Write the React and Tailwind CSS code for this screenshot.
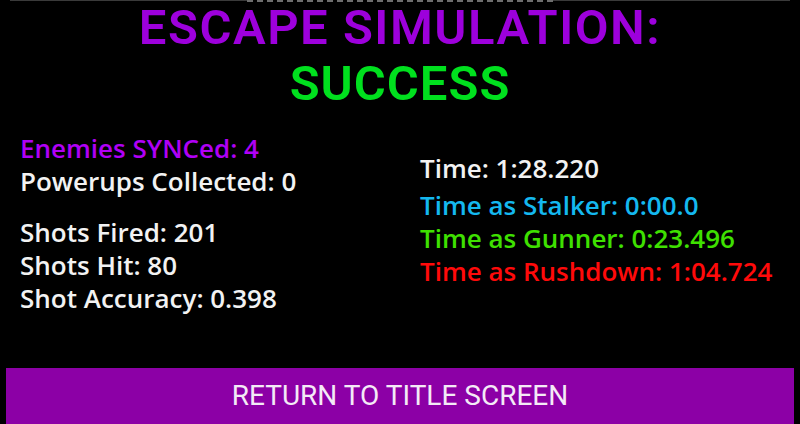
export default function App() {
  const left = [
    { text: 'Enemies SYNCed: 4', color: 'text-[#b000f5]' },
    { text: 'Powerups Collected: 0', color: 'text-[#f2f2f2]' },
  ];
  const shots = ['Shots Fired: 201', 'Shots Hit: 80', 'Shot Accuracy: 0.398'];
  const times = [
    { text: 'Time as Stalker: 0:00.0', color: 'text-[#14b8ef]' },
    { text: 'Time as Gunner: 0:23.496', color: 'text-[#3fe000]' },
    { text: 'Time as Rushdown: 1:04.724', color: 'text-[#ff0a0a]' },
  ];

  return (
    <div className="w-[800px] h-[424px] bg-black flex flex-col overflow-hidden font-['Open_Sans',sans-serif]">
      <div className="h-[3px] mx-[10px] flex items-start">
        <div className="flex-1 border-t border-[#3a3a3a]" />
        <div className="w-[306px] h-[2px] border-t-2 border-dashed border-[#6e6e6e]" />
        <div className="flex-1 border-t border-[#3a3a3a]" />
      </div>

      <div className="flex flex-col items-center font-['Roboto',sans-serif] font-semibold text-[49px] leading-[56px] -mt-[3px]">
        <h1 className="text-[#9d00dc] whitespace-nowrap tracking-[1.5px]">ESCAPE SIMULATION:</h1>
        <h2 className="text-[#00e01e] tracking-[1px]">SUCCESS</h2>
      </div>

      <div className="grid grid-cols-2 mt-[20px] text-[26px] leading-[33px] font-semibold">
        <div className="pl-[20px] flex flex-col">
          {left.map((row) => (
            <p key={row.text} className={row.color}>{row.text}</p>
          ))}
          <div className="mt-[18px] flex flex-col text-[#f2f2f2]">
            {shots.map((s) => (
              <p key={s}>{s}</p>
            ))}
          </div>
        </div>
        <div className="pl-[20px] pt-[20px] flex flex-col">
          <p className="text-[#f2f2f2] mb-[4px]">Time: 1:28.220</p>
          {times.map((row) => (
            <p key={row.text} className={row.color}>{row.text}</p>
          ))}
        </div>
      </div>

      <button className="mt-auto mx-[6px] h-[56px] bg-[#8c00a6] flex items-center justify-center font-['Roboto',sans-serif] text-[28px] text-[#f4eaf6]">
        <span className="whitespace-nowrap">RETURN TO TITLE SCREEN</span>
      </button>
    </div>
  );
}
